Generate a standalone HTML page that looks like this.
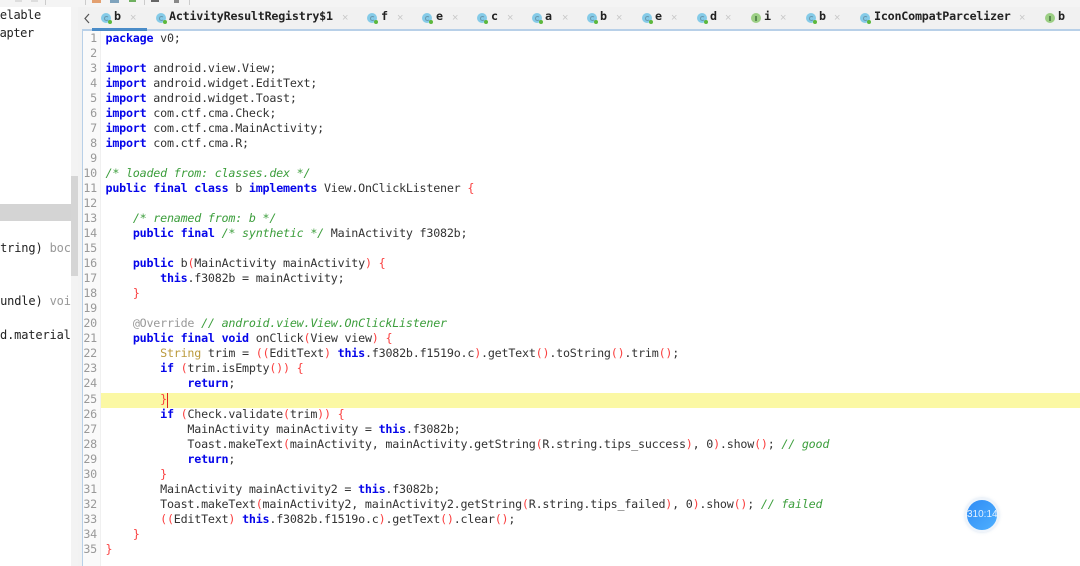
<!DOCTYPE html>
<html><head><meta charset="utf-8">
<style>
html,body{margin:0;padding:0;background:#fff}
#r{position:relative;width:1080px;height:566px;overflow:hidden;background:#fff;font-family:"DejaVu Sans Mono","Liberation Mono",monospace;font-size:11.7px;letter-spacing:-.21px;color:#333;filter:blur(.3px)}
.a{position:absolute}
.l{position:absolute;left:105.5px;white-space:pre;line-height:15px;height:15px}
.n{position:absolute;left:82px;width:15px;text-align:right;color:#999;line-height:15px;height:15px;white-space:pre}
.k{color:#0505ea;font-weight:bold}
i{color:#3c9e3c;font-style:italic}
u{color:#fa4040;text-decoration:none}
s{color:#bb9a3c;text-decoration:none}
em{color:#999;font-style:normal}
.tt{position:absolute;top:9px;font-weight:bold;font-size:11.7px;color:#222;line-height:15px;white-space:pre}
.x{position:absolute;top:12px;color:#c8c8c8;font-family:"Liberation Sans",sans-serif;font-size:11px;line-height:13px}
.ic{position:absolute;top:13px;width:10px;height:10px;border-radius:50%;background:#85cbe8}
.ic:before{content:"";position:absolute;left:3px;top:3px;width:3px;height:3px;border:1px solid #6a97ac;border-right-color:transparent;border-radius:50%}
.ic:after{content:"";position:absolute;left:7px;top:7px;width:4px;height:4px;border-radius:50%;background:#5cb83c}
.iv{position:absolute;top:13px;width:10px;height:10px;border-radius:50%;background:#9ccf84}
.iv:before{content:"";position:absolute;left:4px;top:3px;width:2px;height:5px;background:#5a8a50}
.lp{position:absolute;white-space:pre;color:#222;font-size:12px;line-height:15px}
</style></head><body>
<div id="r">
<!-- toolbar strip -->
<div class="a" style="left:0;top:0;width:1080px;height:7px;background:#f4f4f4"></div>
<div class="a" style="left:15px;top:0;width:7px;height:2px;background:#ddd"></div>
<div class="a" style="left:31px;top:0;width:7px;height:2px;background:#ddd"></div>
<div class="a" style="left:92px;top:0;width:9px;height:3px;background:#e3a070"></div>
<div class="a" style="left:110px;top:0;width:9px;height:3px;background:#7fa3bd"></div>
<div class="a" style="left:129px;top:0;width:7px;height:2px;background:#6fb060"></div>
<div class="a" style="left:151px;top:0;width:8px;height:2px;background:#666"></div>
<div class="a" style="left:174px;top:0;width:5px;height:3px;background:#888"></div>
<div class="a" style="left:45px;top:0;width:1px;height:5px;background:#ccc"></div>
<div class="a" style="left:85px;top:0;width:1px;height:5px;background:#ccc"></div>
<div class="a" style="left:144px;top:0;width:1px;height:5px;background:#ccc"></div>
<div class="a" style="left:189px;top:0;width:1px;height:5px;background:#ccc"></div>

<!-- left panel -->
<div class="a" style="left:0;top:7px;width:71px;height:559px;background:#fff;overflow:hidden">
<div class="a" style="left:0;top:197px;width:71px;height:17px;background:#d4d4d4"></div>
<div class="lp" style="top:1px;left:-7px;letter-spacing:-.39px">Relable</div>
<div class="lp" style="top:19px;left:-14px;letter-spacing:-.39px">Adapter</div>
<div class="lp" style="top:234px;left:-7px;letter-spacing:-.15px">String) <span style="color:#999">boc</span></div>
<div class="lp" style="top:287px;left:-7px;letter-spacing:-.15px">Bundle) <span style="color:#999">voi</span></div>
<div class="lp" style="top:321px;left:0;letter-spacing:-.15px">d.material</div>
</div>
<div class="a" style="left:71px;top:7px;width:7px;height:559px;background:#f3f3f3"></div>
<div class="a" style="left:71px;top:176px;width:7px;height:100px;background:#d5d5d5"></div>
<div class="a" style="left:78px;top:7px;width:4px;height:559px;background:#f2f2f2"></div>

<!-- tab bar -->
<div class="a" style="left:78px;top:7px;width:1002px;height:23px;background:#f1f1f1"></div>
<div class="a" style="left:82px;top:29px;width:998px;height:2px;background:#b8d0e8"></div>
<div class="a" style="left:92px;top:28px;width:55px;height:3px;background:#4a8cc8"></div>
<svg class="a" style="left:83px;top:13px" width="8" height="11"><path d="M6 1L2 5.5L6 10" fill="none" stroke="#555" stroke-width="1.2"/></svg>

<span class="ic" style="left:101px"></span><span class="tt" style="left:114px">b</span><span class="x" style="left:130px">×</span>
<span class="ic" style="left:156px"></span><span class="tt" style="left:169px">ActivityResultRegistry$1</span><span class="x" style="left:342px">×</span>
<span class="ic" style="left:367px"></span><span class="tt" style="left:381px">f</span><span class="x" style="left:397px">×</span>
<span class="ic" style="left:422px"></span><span class="tt" style="left:436px">e</span><span class="x" style="left:452px">×</span>
<span class="ic" style="left:477px"></span><span class="tt" style="left:491px">c</span><span class="x" style="left:507px">×</span>
<span class="ic" style="left:532px"></span><span class="tt" style="left:545px">a</span><span class="x" style="left:562px">×</span>
<span class="ic" style="left:587px"></span><span class="tt" style="left:600px">b</span><span class="x" style="left:616px">×</span>
<span class="ic" style="left:642px"></span><span class="tt" style="left:655px">e</span><span class="x" style="left:671px">×</span>
<span class="ic" style="left:697px"></span><span class="tt" style="left:710px">d</span><span class="x" style="left:725px">×</span>
<span class="iv" style="left:751px"></span><span class="tt" style="left:764px">i</span><span class="x" style="left:780px">×</span>
<span class="ic" style="left:806px"></span><span class="tt" style="left:819px">b</span><span class="x" style="left:834px">×</span>
<span class="ic" style="left:860px"></span><span class="tt" style="left:874px">IconCompatParcelizer</span><span class="x" style="left:1019px">×</span>
<span class="iv" style="left:1045px"></span><span class="tt" style="left:1058px">b</span>

<!-- editor -->
<div class="a" style="left:82px;top:31px;width:1px;height:535px;background:#b8d0e8"></div>
<div class="a" style="left:83px;top:31px;width:17px;height:535px;background:#fafafa"></div>
<div class="a" style="left:100px;top:31px;width:1px;height:535px;background:#f0f0f0"></div>
<div class="a" style="left:101px;top:393px;width:979px;height:15px;background:#fbf8a4"></div>
<div class="a" style="left:167px;top:393px;width:1px;height:15px;background:#e02020"></div>

<div class="n" style="top:31px">1</div><div class="l" style="top:31px"><span class="k">package</span> v0;</div>
<div class="n" style="top:46px">2</div>
<div class="n" style="top:61px">3</div><div class="l" style="top:61px"><span class="k">import</span> android.view.View;</div>
<div class="n" style="top:76px">4</div><div class="l" style="top:76px"><span class="k">import</span> android.widget.EditText;</div>
<div class="n" style="top:91px">5</div><div class="l" style="top:91px"><span class="k">import</span> android.widget.Toast;</div>
<div class="n" style="top:106px">6</div><div class="l" style="top:106px"><span class="k">import</span> com.ctf.cma.Check;</div>
<div class="n" style="top:121px">7</div><div class="l" style="top:121px"><span class="k">import</span> com.ctf.cma.MainActivity;</div>
<div class="n" style="top:136px">8</div><div class="l" style="top:136px"><span class="k">import</span> com.ctf.cma.R;</div>
<div class="n" style="top:151px">9</div>
<div class="n" style="top:166px">10</div><div class="l" style="top:166px"><i>/* loaded from: classes.dex */</i></div>
<div class="n" style="top:181px">11</div><div class="l" style="top:181px"><span class="k">public</span> <span class="k">final</span> <span class="k">class</span> b <span class="k">implements</span> View.OnClickListener <u>{</u></div>
<div class="n" style="top:196px">12</div>
<div class="n" style="top:211px">13</div><div class="l" style="top:211px">    <i>/* renamed from: b */</i></div>
<div class="n" style="top:226px">14</div><div class="l" style="top:226px">    <span class="k">public</span> <span class="k">final</span> <i>/* synthetic */</i> MainActivity f3082b;</div>
<div class="n" style="top:241px">15</div>
<div class="n" style="top:256px">16</div><div class="l" style="top:256px">    <span class="k">public</span> b<u>(</u>MainActivity mainActivity<u>)</u> <u>{</u></div>
<div class="n" style="top:271px">17</div><div class="l" style="top:271px">        <span class="k">this</span>.f3082b = mainActivity;</div>
<div class="n" style="top:286px">18</div><div class="l" style="top:286px">    <u>}</u></div>
<div class="n" style="top:301px">19</div>
<div class="n" style="top:316px">20</div><div class="l" style="top:316px">    <em>@Override</em> <i>// android.view.View.OnClickListener</i></div>
<div class="n" style="top:331px">21</div><div class="l" style="top:331px">    <span class="k">public</span> <span class="k">final</span> <span class="k">void</span> onClick<u>(</u>View view<u>)</u> <u>{</u></div>
<div class="n" style="top:346px">22</div><div class="l" style="top:346px">        <s>String</s> trim = <u>((</u>EditText<u>)</u> <span class="k">this</span>.f3082b.f1519o.c<u>)</u>.getText<u>()</u>.toString<u>()</u>.trim<u>()</u>;</div>
<div class="n" style="top:361px">23</div><div class="l" style="top:361px">        <span class="k">if</span> <u>(</u>trim.isEmpty<u>())</u> <u>{</u></div>
<div class="n" style="top:376px">24</div><div class="l" style="top:376px">            <span class="k">return</span>;</div>
<div class="n" style="top:392px">25</div><div class="l" style="top:392px">        <u>}</u></div>
<div class="n" style="top:407px">26</div><div class="l" style="top:407px">        <span class="k">if</span> <u>(</u>Check.validate<u>(</u>trim<u>))</u> <u>{</u></div>
<div class="n" style="top:422px">27</div><div class="l" style="top:422px">            MainActivity mainActivity = <span class="k">this</span>.f3082b;</div>
<div class="n" style="top:437px">28</div><div class="l" style="top:437px">            Toast.makeText<u>(</u>mainActivity, mainActivity.getString<u>(</u>R.string.tips_success<u>)</u>, 0<u>)</u>.show<u>()</u>; <i>// good</i></div>
<div class="n" style="top:452px">29</div><div class="l" style="top:452px">            <span class="k">return</span>;</div>
<div class="n" style="top:467px">30</div><div class="l" style="top:467px">        <u>}</u></div>
<div class="n" style="top:482px">31</div><div class="l" style="top:482px">        MainActivity mainActivity2 = <span class="k">this</span>.f3082b;</div>
<div class="n" style="top:497px">32</div><div class="l" style="top:497px">        Toast.makeText<u>(</u>mainActivity2, mainActivity2.getString<u>(</u>R.string.tips_failed<u>)</u>, 0<u>)</u>.show<u>()</u>; <i>// failed</i></div>
<div class="n" style="top:512px">33</div><div class="l" style="top:512px">        <u>((</u>EditText<u>)</u> <span class="k">this</span>.f3082b.f1519o.c<u>)</u>.getText<u>()</u>.clear<u>()</u>;</div>
<div class="n" style="top:527px">34</div><div class="l" style="top:527px">    <u>}</u></div>
<div class="n" style="top:542px">35</div><div class="l" style="top:542px"><u>}</u></div>

<!-- floating timer -->
<div class="a" style="left:965px;top:498px;width:34px;height:34px;border-radius:50%;background:linear-gradient(135deg,#2f8cf5,#4fb0ff);border:2px solid #eef4fb;box-sizing:border-box;box-shadow:0 0 3px rgba(120,160,210,.35);color:#e4f1ff;font-family:'Liberation Sans',sans-serif;font-size:10px;letter-spacing:0;line-height:30px;text-align:center;white-space:nowrap;overflow:hidden">310:14</div>
</div>
</body></html>
